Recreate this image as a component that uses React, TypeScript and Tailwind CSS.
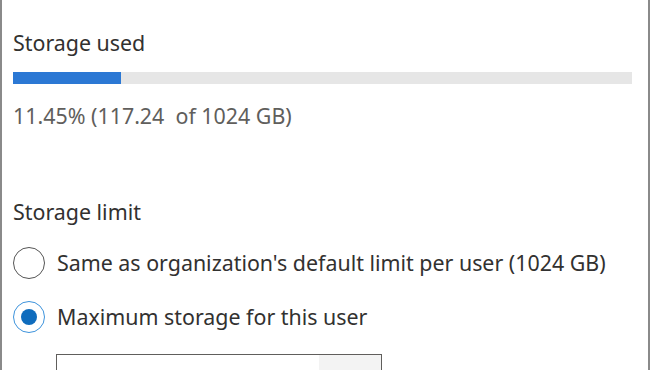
import React from "react";

function Radio({ checked }: { checked?: boolean }) {
  return (
    <span
      className={`flex h-[32px] w-[32px] shrink-0 items-center justify-center rounded-full border-[1.5px] bg-white ${
        checked ? "border-[#3d93dc]" : "border-[#555555]"
      }`}
    >
      {checked ? <span className="h-[16px] w-[16px] rounded-full bg-[#0f6cbd]" /> : null}
    </span>
  );
}

export default function App() {
  const usedPct = (117.24 / 1024) * 100;

  return (
    <div className="h-[370px] w-[650px] overflow-hidden bg-white font-['Noto_Sans',sans-serif] text-[21.4px] leading-[28px] text-[#323130]">
      <div className="h-full border-x-2 border-[#8a8a8a] px-[11px] pt-[29px]">
        <p>Storage used</p>

        <div className="mt-[15px] h-3 w-[619px] bg-[#e6e6e6]">
          <div className="h-full bg-[#2b78d4]" style={{ width: `${usedPct * 1.524}%` }} />
        </div>

        <p className="mt-[18px] text-[#605e5c]">11.45% (117.24&nbsp; of 1024 GB)</p>

        <p className="mt-[68px]">Storage limit</p>

        <div className="mt-[21px] flex flex-col gap-[22px]">
          <label className="flex items-center gap-[12px]">
            <Radio />
            <span>Same as organization's default limit per user (1024 GB)</span>
          </label>
          <label className="flex items-center gap-[12px]">
            <Radio checked />
            <span>Maximum storage for this user</span>
          </label>
        </div>

        <div className="ml-[43px] mt-[21px] flex h-[34px] w-[326px] border border-[#605e5c]">
          <div className="flex-1" />
          <div className="w-[62px] bg-[#f3f3f3]" />
        </div>
      </div>
    </div>
  );
}
